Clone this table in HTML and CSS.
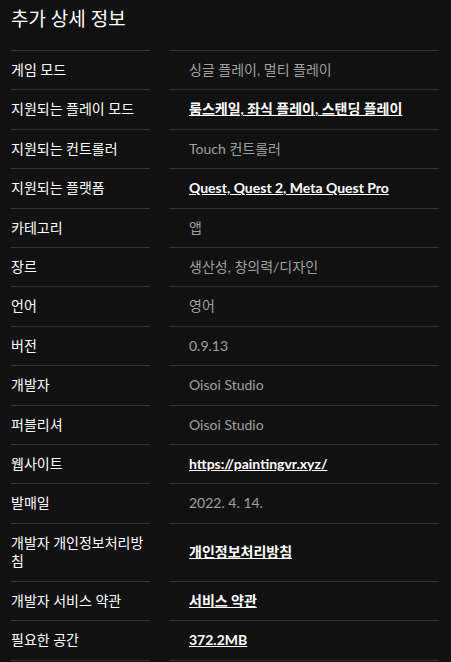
FILE: index.html
```html
<!DOCTYPE html>
<html lang="ko">
  <head>
    <meta charset="UTF-8" />
    <meta name="viewport" content="width=device-width, initial-scale=1.0" />
    <title>추가 상세 정보</title>
    <link rel="stylesheet" href="styles.css">
  </head>
  <body>
    <div class="container">
      <h2>추가 상세 정보</h2>
      <div class="details">
        <div class="label">게임 모드</div>
        <div class="value">싱글 플레이, 멀티 플레이</div>

        <div class="label">지원되는 플레이 모드</div>
        <div class="value"><a href="#">룸스케일, 좌식 플레이, 스탠딩 플레이</a></div>

        <div class="label">지원되는 컨트롤러</div>
        <div class="value">Touch 컨트롤러</div>

        <div class="label">지원되는 플랫폼</div>
        <div class="value"><a href="#">Quest, Quest 2, Meta Quest Pro</a></div>

        <div class="label">카테고리</div>
        <div class="value">앱</div>

        <div class="label">장르</div>
        <div class="value">생산성, 창의력/디자인</div>

        <div class="label">언어</div>
        <div class="value">영어</div>

        <div class="label">버전</div>
        <div class="value">0.9.13</div>

        <div class="label">개발자</div>
        <div class="value">Oisoi Studio</div>

        <div class="label">퍼블리셔</div>
        <div class="value">Oisoi Studio</div>

        <div class="label">웹사이트</div>
        <div class="value"><a href="#">https://paintingvr.xyz/</a></div>

        <div class="label">발매일</div>
        <div class="value">2022. 4. 14.</div>

        <div class="label">개발자 개인정보처리방침</div>
        <div class="value"><a href="#">개인정보처리방침</a></div>

        <div class="label">개발자 서비스 약관</div>
        <div class="value"><a href="#">서비스 약관</a></div>

        <div class="label last">필요한 공간</div>
        <div class="value last"><a href="#">372.2MB</a></div>
      </div>
    </div>
  </body>
</html>
```

FILE: styles.css
```css
body {
  margin: 0;
  padding: 0;
  background-color: #111;
  color: #fff;
  font-family: Lato, "Noto Sans CJK KR", sans-serif;
}
.container {
  padding: 0 12px 0 11px;
}
h2 {
  margin: 0;
  padding: 7px 0 19px;
  font-size: 19px;
  font-weight: normal;
  line-height: 24px;
}
.details {
  display: grid;
  grid-template-columns: 139px 1fr;
  column-gap: 19px;
  font-size: 14px;
  line-height: 18.4px;
}
.label,
.value {
  display: flex;
  align-items: center;
  padding: 10px 0;
  border-top: 1px solid #333;
}
.value {
  padding-left: 20px;
  color: #a0a0a0;
}
.last {
  border-bottom: 1px solid #333;
}
.value a {
  color: #fff;
  font-weight: bold;
  text-decoration: underline;
}
```
